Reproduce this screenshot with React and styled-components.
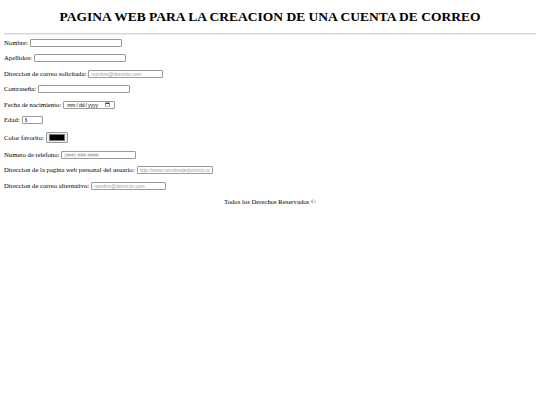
import React from 'react'
import styled, { createGlobalStyle } from 'styled-components'

const Global = createGlobalStyle`
    body {
        margin: 4px;
        font-family: 'Liberation Serif', 'Times New Roman', serif;
        font-size: 6.7px;
        color: #000;
        background: #fff;
    }
`;
const Titulo = styled.h1`
    text-align: center;
    font-size: 13.5px;
    font-weight: 700;
    margin: 4.5px 0 9px 0;
    line-height: 15px;
`;
const Linea = styled.hr`
    height: 0;
    margin: 0;
    border: none;
    border-top: 1px solid #d6d6d6;
    border-bottom: 1px solid #ececec;
`;
const Form = styled.form`
    display: flex;
    flex-direction: column;
    gap: 7.6px;
    padding-top: 4px;
`;
const Campo = styled.p`
    display: flex;
    align-items: center;
    gap: 2px;
    margin: 0;
    line-height: 8px;
`;
const Label = styled.label`
    white-space: nowrap;
`;
const Input = styled.input`
    box-sizing: border-box;
    width: ${p => p.$w || 92}px;
    height: ${p => p.$h || 8}px;
    padding: 0 2px;
    border: 1px solid #9a9a9a;
    border-radius: 1px;
    font-family: 'Liberation Sans', Arial, sans-serif;
    font-size: 5px;
    color: #000;
    background: #fff;
    outline: none;
    &::placeholder {
        color: #a0a0a0;
    }
    &::-webkit-inner-spin-button,
    &::-webkit-outer-spin-button {
        -webkit-appearance: none;
        margin: 0;
    }
`;
const ColorInput = styled.input`
    box-sizing: border-box;
    width: 22px;
    height: 11px;
    padding: 1px 2px;
    border: 1px solid #9a9a9a;
    border-radius: 1px;
    background: #efefef;
    &::-webkit-color-swatch-wrapper {
        padding: 0;
    }
    &::-webkit-color-swatch {
        border: 1px solid #777;
        border-radius: 0;
    }
`;
const Pie = styled.footer`
    text-align: center;
    margin-top: 8px;
`;

export default function App() {
  return (
    <>
      <Global />
      <Titulo>PAGINA WEB PARA LA CREACION DE UNA CUENTA DE CORREO</Titulo>
      <Linea />
      <Form onSubmit={e => e.preventDefault()}>
        <Campo>
          <Label>Nombre:</Label>
          <Input type="text" name="nombre" />
        </Campo>
        <Campo>
          <Label>Apellidos:</Label>
          <Input type="text" name="apellidos" />
        </Campo>
        <Campo>
          <Label>Direccion de correo solicitada:</Label>
          <Input type="email" $w={75} placeholder="nombre@dominio.com" />
        </Campo>
        <Campo>
          <Label>Contraseña:</Label>
          <Input type="password" name="pass" />
        </Campo>
        <Campo>
          <Label>Fecha de nacimiento:</Label>
          <Input type="date" $w={52} />
        </Campo>
        <Campo>
          <Label>Edad:</Label>
          <Input type="number" $w={21} defaultValue="6" />
        </Campo>
        <Campo>
          <Label>Color favorito:</Label>
          <ColorInput type="color" defaultValue="#000000" />
        </Campo>
        <Campo>
          <Label>Numero de telefono:</Label>
          <Input type="tel" $w={75} placeholder="(###) ###-####" />
        </Campo>
        <Campo>
          <Label>Direccion de la pagina web personal del usuario:</Label>
          <Input type="url" $w={76} placeholder="http://www.nombrededominio.com" />
        </Campo>
        <Campo>
          <Label>Direccion de correo alternativo:</Label>
          <Input type="email" $w={75} placeholder="nombre@dominio.com" />
        </Campo>
      </Form>
      <Pie>Todos los Derechos Reservados ©</Pie>
    </>
  )
}
